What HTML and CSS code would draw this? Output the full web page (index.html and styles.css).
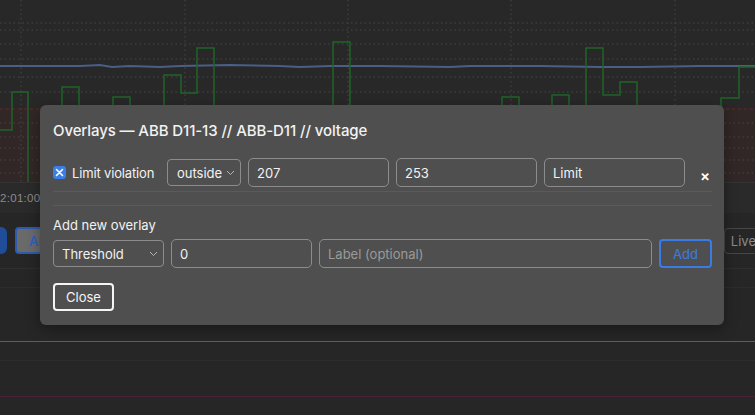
FILE: index.html
```html
<!DOCTYPE html>
<html lang="en">
<head>
    <meta charset="UTF-8">
    <meta name="viewport" content="width=device-width, initial-scale=1.0">
    <title>Overlays</title>
    <link rel="stylesheet" href="styles.css">
</head>
<body>
    <div class="app">
        <!-- chart behind the dialog -->
        <svg class="chart" width="755" height="183" viewBox="0 0 755 183">
            <rect x="0" y="108" width="755" height="75" class="limit-zone"/>
            <g class="grid">
                <line x1="0" y1="23" x2="755" y2="23"/>
                <line x1="0" y1="30" x2="755" y2="30"/>
                <line x1="0" y1="44" x2="755" y2="44"/>
                <line x1="0" y1="59" x2="755" y2="59"/>
                <line x1="0" y1="77" x2="755" y2="77"/>
                <line x1="0" y1="92" x2="755" y2="92"/>
                <line x1="0" y1="123" x2="755" y2="123"/>
                <line x1="0" y1="137" x2="755" y2="137"/>
                <line x1="0" y1="148" x2="755" y2="148"/>
                <line x1="0" y1="160" x2="755" y2="160"/>
                <line x1="0" y1="173" x2="755" y2="173"/>
                <line x1="21" y1="0" x2="21" y2="183"/>
                <line x1="185" y1="0" x2="185" y2="183"/>
                <line x1="348" y1="0" x2="348" y2="183"/>
                <line x1="511" y1="0" x2="511" y2="183"/>
                <line x1="675" y1="0" x2="675" y2="183"/>
            </g>
            <line class="limit-line" x1="0" y1="109" x2="755" y2="109"/>
            <polyline class="series-blue" points="0,66 40,66 80,66 100,65 112,67 130,66 160,67 180,66 230,65 280,66 300,67 330,66 380,66 450,67 470,66 540,66 600,67 640,67 700,66 755,66"/>
            <polyline class="series-green" points="0,130 12,130 12,92 28,92 28,183 62,183 62,87 79,87 79,183 113,183 113,97 130,97 130,183 164,183 164,75 181,75 181,93 197,93 197,48 214,48 214,183 333,183 333,42 350,42 350,183 502,183 502,97 519,97 519,183 552,183 552,95 569,95 569,183 586,183 586,48 603,48 603,95 620,95 620,82 637,82 637,183 721,183 721,98 739,98 739,67 755,67"/>
            <line class="axis-line" x1="0" y1="182.5" x2="755" y2="182.5"/>
        </svg>

        <div class="axis">
            <span class="tick">2:01:00</span>
        </div>

        <div class="toolbar">
            <div class="tool-left">
                <button class="btn-fill"></button>
                <button class="btn-outline">All</button>
            </div>
            <button class="btn-live">Live</button>
        </div>

        <div class="lane lane-a"></div>
        <div class="lane lane-b"></div>
        <div class="lane lane-c"></div>
        <div class="lane lane-d"></div>
    </div>

    <div class="modal">
        <h2 class="modal-title">Overlays — ABB D11-13 // ABB-D11 // voltage</h2>

        <div class="overlay-row">
            <label class="check-label">
                <span class="check">
                    <svg width="9" height="9" viewBox="0 0 9 9"><path d="M1.5 1.5 L7.5 7.5 M7.5 1.5 L1.5 7.5" stroke="#fff" stroke-width="1.6" stroke-linecap="round"/></svg>
                </span>
                Limit violation
            </label>
            <div class="select select-mode">
                <span>outside</span>
                <svg class="chev" width="9" height="6" viewBox="0 0 9 6"><path d="M1 1 L4.5 4.5 L8 1" fill="none" stroke="#b5b5b5" stroke-width="1"/></svg>
            </div>
            <input class="field" type="text" value="207">
            <input class="field" type="text" value="253">
            <input class="field" type="text" value="Limit">
            <button class="remove">×</button>
        </div>

        <div class="sep"></div>

        <div class="add-title">Add new overlay</div>
        <div class="add-row">
            <div class="select select-type">
                <span>Threshold</span>
                <svg class="chev" width="9" height="6" viewBox="0 0 9 6"><path d="M1 1 L4.5 4.5 L8 1" fill="none" stroke="#b5b5b5" stroke-width="1"/></svg>
            </div>
            <input class="field field-value" type="text" value="0">
            <input class="field field-label" type="text" placeholder="Label (optional)">
            <button class="btn-add">Add</button>
        </div>

        <button class="btn-close">Close</button>
    </div>
</body>
</html>
```

FILE: styles.css
```css
body {
    margin: 0;
    overflow: hidden;
    background-color: #262626;
    font-family: 'Inter', 'Noto Sans', sans-serif;
}
.app {
    width: 755px;
    height: 415px;
    overflow: hidden;
}
.chart {
    display: block;
    background-color: #282828;
}
.grid line {
    stroke: #464646;
    stroke-width: 1;
    stroke-dasharray: 1.5 3;
}
.limit-zone {
    fill: rgba(120, 40, 40, 0.13);
}
.limit-line {
    stroke: #5b2b2b;
    stroke-width: 1;
    stroke-dasharray: 3 3;
}
.series-blue {
    fill: none;
    stroke: #4a5e86;
    stroke-width: 2;
}
.series-green {
    fill: none;
    stroke: #1f6429;
    stroke-width: 1.5;
}
.axis-line {
    stroke: #343434;
    stroke-width: 1;
}
.axis {
    height: 30px;
    background-color: #2a2a2a;
    display: flex;
    align-items: center;
}
.tick {
    font-family: 'Liberation Sans', sans-serif;
    font-size: 11.5px;
    color: #8c8c8c;
    letter-spacing: 0.3px;
}
.toolbar {
    height: 56px;
    box-sizing: border-box;
    padding-top: 14px;
    display: flex;
    justify-content: space-between;
    align-items: flex-start;
    border-bottom: 1px solid #2e2e2e;
}
.tool-left {
    display: flex;
    gap: 8px;
}
.btn-fill {
    margin-left: -20px;
    width: 27px;
    height: 27px;
    border: none;
    border-radius: 6px;
    background-color: #1f4d99;
}
.btn-outline {
    height: 27px;
    padding: 0 12px;
    border: 2px solid #2b5bb0;
    border-radius: 4px;
    background-color: #6a6a6a;
    color: #2d5ec0;
    font-family: inherit;
    font-size: 13px;
    font-weight: 500;
}
.btn-live {
    height: 26px;
    margin-top: 1px;
    margin-right: -20px;
    padding: 0 18px 0 6px;
    border: 1px solid #474747;
    border-radius: 4px;
    background-color: transparent;
    color: #8a8a8a;
    font-family: inherit;
    font-size: 13px;
}
.lane {
    border-bottom: 1px solid #2d2d2d;
}
.lane-a {
    height: 18px;
}
.lane-b {
    height: 53px;
    border-bottom: 1px solid #4b5f8a;
}
.lane-c {
    height: 18px;
}
.lane-d {
    height: 35px;
    border-bottom: 1px solid #4a2036;
}

/* dialog */
.modal {
    position: absolute;
    top: 105px;
    left: 40px;
    width: 684px;
    box-sizing: border-box;
    padding: 16px 12px 14px 13px;
    background-color: #4f4f4f;
    border-radius: 6px;
    box-shadow: 0 4px 14px rgba(0, 0, 0, 0.35);
    color: #f2f2f2;
}
.modal-title {
    margin: 0 0 17px;
    font-size: 15px;
    line-height: 20px;
    font-weight: 500;
    letter-spacing: -0.1px;
}
.overlay-row {
    display: flex;
    align-items: center;
    gap: 7px;
    padding-bottom: 4px;
    border-bottom: 1px solid #5a5a5a;
}
.check-label {
    width: 107px;
    display: flex;
    align-items: center;
    gap: 6px;
    font-size: 13px;
    letter-spacing: -0.15px;
}
.check {
    width: 13px;
    height: 13px;
    border-radius: 3px;
    background-color: #3a7ee8;
    display: flex;
    align-items: center;
    justify-content: center;
}
.check svg {
    display: block;
}
.select {
    box-sizing: border-box;
    height: 27px;
    border: 1px solid #8c8c8c;
    border-radius: 4px;
    display: flex;
    align-items: center;
    justify-content: space-between;
    font-size: 13px;
}
.select-mode {
    width: 74px;
    padding: 0 5px 0 9px;
}
.select-type {
    width: 111px;
    padding: 0 5px 0 8px;
}
.field {
    box-sizing: border-box;
    width: 141px;
    height: 29px;
    padding: 0 8px;
    border: 1px solid #8c8c8c;
    border-radius: 5px;
    background-color: transparent;
    color: #f2f2f2;
    font-family: inherit;
    font-size: 13px;
    outline: none;
}
.field::placeholder {
    color: #9a9a9a;
}
.remove {
    margin-left: 8px;
    margin-top: 6px;
    padding: 0;
    border: none;
    background: none;
    color: #fff;
    font-family: inherit;
    font-size: 15px;
    font-weight: 600;
    line-height: 1;
}
.sep {
    margin-top: 13px;
    border-top: 1px solid #5b5b5b;
}
.add-title {
    margin: 11px 0 6px;
    font-size: 13px;
    line-height: 16px;
}
.add-row {
    display: flex;
    align-items: center;
    gap: 7px;
}
.field-label {
    flex: 1;
}
.btn-add {
    box-sizing: border-box;
    width: 53px;
    height: 29px;
    border: 2px solid #3b7be6;
    border-radius: 4px;
    background-color: transparent;
    color: #3b7be6;
    font-family: inherit;
    font-size: 13px;
}
.btn-close {
    display: block;
    box-sizing: border-box;
    margin-top: 15px;
    width: 61px;
    height: 28px;
    border: 2px solid #f5f5f5;
    border-radius: 4px;
    background-color: transparent;
    color: #f5f5f5;
    font-family: inherit;
    font-size: 13px;
}
```
